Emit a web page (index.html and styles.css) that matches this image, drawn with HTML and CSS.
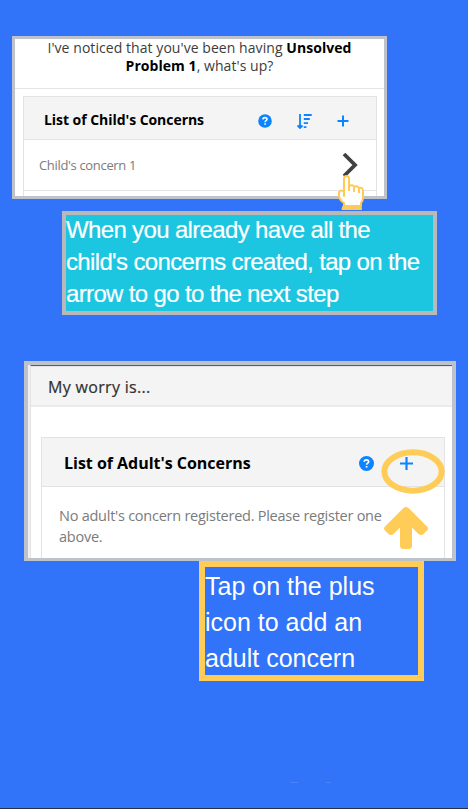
FILE: index.html
```html
<!DOCTYPE html>
<html lang="en">
<head>
<meta charset="utf-8">
<title>Concerns tutorial</title>
<link rel="stylesheet" href="styles.css">
</head>
<body>
<main class="page">
  <section class="shot child">
    <p class="question"><span>I've noticed that you've been having <b>Unsolved</b></span><br><span><b>Problem 1</b>, what's up?</span></p>
    <div class="card">
      <header class="card-head">
        <h2>List of Child's Concerns</h2>
        <svg class="help" viewBox="0 0 14 14"><circle cx="7" cy="7" r="6.8"/><path class="mark" d="M4.9 5.4C5 3 9 3 9 5.3C9 6.7 7.1 6.7 7.1 8.2M7.1 9.3V10.8"/></svg>
        <svg class="sort" viewBox="0 0 15 15"><path d="M3 0V13M0.5 11.5L3 14L5.5 11.5M6.8 1H14.7M6.8 5H12.8M6.8 9.2H11M6.8 13.2H9.4"/></svg>
        <svg class="plus" viewBox="0 0 12 12"><path d="M6 .5V11.5M.5 6H11.5"/></svg>
      </header>
      <div class="row"><span>Child's concern 1</span>
        <svg class="chevron" viewBox="0 0 16 26"><path d="M2 2L13 13L2 24"/></svg>
      </div>
    </div>
    <svg class="hand" viewBox="0 0 28 37"><path d="M7 21V4Q7 1 9.5 1Q12 1 12 4V11Q16 9 17 12Q20 10 22 13Q26 12 26 16V23Q26 26 24 28V31H7V28Q2 25 2 20V17Q4 14 7 17Z"/><path d="M12 11V16M17 12V17M22 13V18M7 30L5.5 34H24L23 30"/><path class="cuff" d="M5 33.5H24"/></svg>
  </section>
  <p class="note cyan">When you already have all the<br>child's concerns created, tap on the<br>arrow to go to the next step</p>
  <section class="shot adult">
    <div class="screen">
      <h1>My worry is...</h1>
      <div class="card">
        <header class="card-head">
          <h2>List of Adult's Concerns</h2>
          <svg class="help" viewBox="0 0 14 14"><circle cx="7" cy="7" r="7"/><path class="mark" d="M4.9 5.4C5 3 9 3 9 5.3C9 6.7 7.1 6.7 7.1 8.2M7.1 9.3V10.8"/></svg>
          <svg class="plus" viewBox="0 0 12 12"><path d="M6 0V12M0 6H12"/></svg>
        </header>
        <p class="empty">No adult's concern registered. Please register one<br>above.</p>
      </div>
    </div>
    <svg class="ring" viewBox="0 0 64 46"><ellipse cx="32" cy="22.5" rx="28.6" ry="19.2"/></svg>
    <svg class="arrow" viewBox="0 0 44 42"><path d="M19.5 1Q22 -1 24.5 1L43 19.5Q45 21.5 43 23.5L39.5 27Q37 29 34.5 27L28 20.5V38.5Q28 42 24.5 42H19.5Q16 42 16 38.5V20.5L9.5 27Q7 29 4.5 27L1 23.5Q-1 21.5 1 19.5Z"/></svg>
  </section>
  <p class="note gold">Tap on the plus<br>icon to add an<br>adult concern</p>
  <div class="ticks"><i></i><i></i></div>
</main>
</body>
</html>
```
FILE: styles.css
```css
* { box-sizing: border-box; }
html, body { margin: 0; }
body { background: #3173f9; font-family: "Open Sans", "Noto Sans", sans-serif; }
h1, h2, p { margin: 0; }
svg { display: block; flex: none; fill: none; stroke: #0a84ff; }
.page { height: 809px; padding-top: 36px; border-bottom: 1px solid #263043; overflow: hidden; display: flex; flex-direction: column; align-items: flex-start; }
.shot { position: relative; background: #fff; border: solid #bec2ca; }
.child { width: 375px; height: 163px; margin-left: 12px; border-width: 3px; }
.question { height: 50px; border-bottom: 1px solid #e6e6e6; text-align: center; font-size: 14px; line-height: 18px; letter-spacing: .06px; color: #3c3c3c; white-space: nowrap; }
.question b { color: #000; }
.child .card { width: 354px; height: 100px; margin: 7px 0 0 8px; border: 1px solid #e3e3e3; border-bottom: 0; }
.card-head { display: flex; align-items: center; background: #f4f4f4; border-bottom: 1px solid #e3e3e3; }
h2 { flex: 1; font-weight: 700; color: #000; white-space: nowrap; }
.child .card-head { height: 43px; padding: 4px 27px 0 20px; }
.child h2 { font-size: 14px; line-height: 18px; letter-spacing: -.05px; }
.help circle { fill: #0a84ff; stroke: none; }
.help .mark { stroke: #fff; stroke-width: 1.6; }
.child .help { width: 14px; height: 14px; margin-right: 25px; }
.sort { width: 15px; height: 15px; margin-right: 25px; stroke-width: 1.8; }
.plus { width: 12px; height: 12px; stroke-width: 2; }
.child .card-head svg { margin-top: 2px; }
.row { height: 51px; display: flex; align-items: center; justify-content: space-between; padding: 0 18px 0 15px; border-bottom: 1px solid #e3e3e3; color: #7b7b7b; font-size: 13px; letter-spacing: -.33px; }
.chevron { width: 16px; height: 26px; stroke: #404040; stroke-width: 3.8; }
.hand { position: absolute; left: 322px; top: 136px; width: 28px; height: 37px; stroke: #ffca58; stroke-width: 2; stroke-linejoin: round; }
.hand path:first-child { fill: #fff; }
.hand .cuff { stroke-width: 3; }
.note { font-family: "Liberation Sans", Arial, sans-serif; color: #fff; white-space: nowrap; }
.cyan { width: 375px; height: 104px; margin: 12px 0 0 62px; border: 4px solid #b9b9bb; background: #1cc5e0; font-size: 24px; line-height: 32px; letter-spacing: -.65px; -webkit-text-stroke: .2px #fff; text-indent: 0; }
.cyan::before { content: ""; display: block; margin-top: -1px; height: 0; }
.cyan { display: flow-root; text-indent: 0; }
.adult { width: 432px; height: 200px; margin: 46px 0 0 24px; border-width: 4px 4px 3px; padding-left: 2px; background: #f0f0f0; }
.screen { height: 193px; overflow: hidden; background: #fff; border-left: 1px solid #e4e4e4; border-top: 1px solid #1b68d8; }
h1 { height: 41px; padding: 1px 0 0 17px; background: #f4f4f4; border-top: 1px solid #e3e3e3; border-bottom: 2px solid #ebebeb; font-size: 16px; line-height: 38px; font-weight: 500; letter-spacing: .32px; -webkit-text-stroke: .2px #303030; color: #303030; }
.adult .card { width: 404px; height: 140px; margin: 30px 0 0 10px; border: 1px solid #e3e3e3; }
.adult .card-head { height: 49px; padding: 3px 31px 0 22px; }
.adult h2 { font-size: 16px; line-height: 22px; margin-top: -2px; letter-spacing: -.02px; }
.adult .help { width: 15px; height: 15px; margin-right: 26px; }
.adult .plus { width: 13px; height: 13px; }
.empty { padding: 18px 0 0 17px; font-size: 14.5px; line-height: 21px; letter-spacing: -.25px; color: #7b7b7b; white-space: nowrap; }
.ring { position: absolute; left: 352.5px; top: 84px; width: 64px; height: 46px; stroke: #ffcc58; stroke-width: 6; }
.arrow { position: absolute; left: 356px; top: 142px; width: 44px; height: 42px; fill: #ffcc58; stroke: none; }
.gold { width: 225px; height: 120px; margin-left: 199px; border: 6px solid #ffcc58; padding-top: 1px; font-size: 25px; line-height: 36px; }
.ticks { display: flex; gap: 28px; margin: 101px 0 0 290px; }
.ticks i { width: 8px; height: 1px; background: #4a84fa; }
.ticks i + i { width: 5px; }
```
